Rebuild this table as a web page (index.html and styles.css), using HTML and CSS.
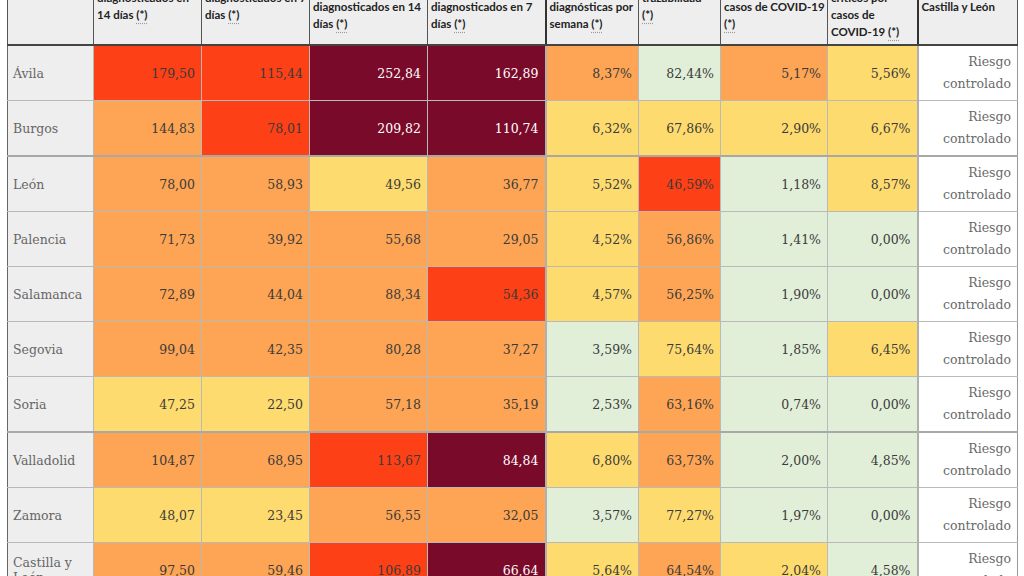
FILE: index.html
```html
<!DOCTYPE html>
<html lang="es">
<head>
<meta charset="utf-8">
<title>Situación epidemiológica Castilla y León</title>
<link rel="stylesheet" href="styles.css">
</head>
<body>
<table class="risk">
  <colgroup>
    <col class="c-name"><col class="c-a"><col class="c-a"><col class="c-b"><col class="c-b">
    <col class="c-c"><col class="c-d"><col class="c-e"><col class="c-f"><col class="c-g">
  </colgroup>
  <thead>
    <tr>
      <th></th>
      <th>Tasa de casos<br>diagnosticados en<br>14 días <abbr title="Por 100.000 habitantes">(*)</abbr></th>
      <th>Tasa de casos<br>diagnosticados en 7<br>días <abbr title="Por 100.000 habitantes">(*)</abbr></th>
      <th>Tasa de casos en<br>mayores de 65 años<br>diagnosticados en 14<br>días <abbr title="Por 100.000 habitantes">(*)</abbr></th>
      <th>Tasa de casos en<br>mayores de 65 años<br>diagnosticados en 7<br>días <abbr title="Por 100.000 habitantes">(*)</abbr></th>
      <th class="grp">Positividad de<br>pruebas<br>diagnósticas por<br>semana <abbr title="Porcentaje">(*)</abbr></th>
      <th>Porcentaje de<br>trazabilidad<br><abbr title="Porcentaje">(*)</abbr></th>
      <th>Ocupación de<br>camas hospital.<br>casos de COVID-19<br><abbr title="Porcentaje">(*)</abbr></th>
      <th>Ocupación de<br>camas UCI<br>críticos por<br>casos de<br>COVID-19 <abbr title="Porcentaje">(*)</abbr></th>
      <th class="grp">Nivel de alerta en<br>Castilla y León</th>
    </tr>
  </thead>
  <tbody>
    <tr>
      <td class="name">Ávila</td>
      <td class="red">179,50</td><td class="red">115,44</td><td class="mar">252,84</td><td class="mar">162,89</td>
      <td class="org grp">8,37%</td><td class="grn">82,44%</td><td class="org">5,17%</td><td class="yel">5,56%</td>
      <td class="lvl grp">Riesgo controlado</td>
    </tr>
    <tr>
      <td class="name">Burgos</td>
      <td class="org">144,83</td><td class="red">78,01</td><td class="mar">209,82</td><td class="mar">110,74</td>
      <td class="yel grp">6,32%</td><td class="yel">67,86%</td><td class="yel">2,90%</td><td class="yel">6,67%</td>
      <td class="lvl grp">Riesgo controlado</td>
    </tr>
  </tbody>
  <tbody>
    <tr>
      <td class="name">León</td>
      <td class="org">78,00</td><td class="org">58,93</td><td class="yel">49,56</td><td class="org">36,77</td>
      <td class="yel grp">5,52%</td><td class="red">46,59%</td><td class="grn">1,18%</td><td class="yel">8,57%</td>
      <td class="lvl grp">Riesgo controlado</td>
    </tr>
    <tr>
      <td class="name">Palencia</td>
      <td class="org">71,73</td><td class="org">39,92</td><td class="org">55,68</td><td class="org">29,05</td>
      <td class="yel grp">4,52%</td><td class="org">56,86%</td><td class="grn">1,41%</td><td class="grn">0,00%</td>
      <td class="lvl grp">Riesgo controlado</td>
    </tr>
    <tr>
      <td class="name">Salamanca</td>
      <td class="org">72,89</td><td class="org">44,04</td><td class="org">88,34</td><td class="red">54,36</td>
      <td class="yel grp">4,57%</td><td class="org">56,25%</td><td class="grn">1,90%</td><td class="grn">0,00%</td>
      <td class="lvl grp">Riesgo controlado</td>
    </tr>
    <tr>
      <td class="name">Segovia</td>
      <td class="org">99,04</td><td class="org">42,35</td><td class="org">80,28</td><td class="org">37,27</td>
      <td class="grn grp">3,59%</td><td class="yel">75,64%</td><td class="grn">1,85%</td><td class="yel">6,45%</td>
      <td class="lvl grp">Riesgo controlado</td>
    </tr>
    <tr>
      <td class="name">Soria</td>
      <td class="yel">47,25</td><td class="yel">22,50</td><td class="org">57,18</td><td class="org">35,19</td>
      <td class="grn grp">2,53%</td><td class="org">63,16%</td><td class="grn">0,74%</td><td class="grn">0,00%</td>
      <td class="lvl grp">Riesgo controlado</td>
    </tr>
  </tbody>
  <tbody>
    <tr>
      <td class="name">Valladolid</td>
      <td class="org">104,87</td><td class="org">68,95</td><td class="red">113,67</td><td class="mar">84,84</td>
      <td class="yel grp">6,80%</td><td class="org">63,73%</td><td class="grn">2,00%</td><td class="grn">4,85%</td>
      <td class="lvl grp">Riesgo controlado</td>
    </tr>
    <tr>
      <td class="name">Zamora</td>
      <td class="yel">48,07</td><td class="yel">23,45</td><td class="org">56,55</td><td class="org">32,05</td>
      <td class="grn grp">3,57%</td><td class="yel">77,27%</td><td class="grn">1,97%</td><td class="grn">0,00%</td>
      <td class="lvl grp">Riesgo controlado</td>
    </tr>
    <tr>
      <td class="name">Castilla y León</td>
      <td class="org">97,50</td><td class="org">59,46</td><td class="red">106,89</td><td class="mar">66,64</td>
      <td class="yel grp">5,64%</td><td class="org">64,54%</td><td class="yel">2,04%</td><td class="grn">4,58%</td>
      <td class="lvl grp">Riesgo controlado</td>
    </tr>
  </tbody>
</table>
</body>
</html>
```
FILE: styles.css
```css
html, body {
  margin: 0;
  padding: 0;
  background: #ffffff;
}
body {
  padding-left: 7px;
  overflow: hidden;
}
.risk {
  margin-top: -50px;
  width: 1010px;
  table-layout: fixed;
  border-collapse: collapse;
  font-family: "DejaVu Serif", "Liberation Serif", serif;
}
.c-name { width: 86px; }
.c-a { width: 108px; }
.c-b { width: 118px; }
.c-c { width: 93px; }
.c-d { width: 82px; }
.c-e { width: 107px; }
.c-f { width: 90px; }
.c-g { width: 100px; }

.risk th {
  background: #eeeeee;
  font-family: Lato, "Liberation Sans", sans-serif;
  font-weight: 700;
  font-size: 11.5px;
  line-height: 17px;
  color: #222;
  text-align: left;
  vertical-align: middle;
  white-space: nowrap;
  padding: 4px 3px;
  border: 1px solid #555;
  border-bottom: 2px solid #444;
  overflow: hidden;
}
.risk th.grp { border-left: 2px solid #333; }
.risk abbr {
  text-decoration: underline dotted #999;
  text-underline-offset: 4px;
}
.risk td {
  height: 54px;
  padding: 0 6px;
  border: 1px solid #b9b9b9;
  font-size: 12.5px;
  color: #3a3a3a;
  text-align: right;
  vertical-align: middle;
}
.risk td.grp { border-left: 2px solid #b0b0b0; }
.risk tbody + tbody tr:first-child td { border-top: 2px solid #a8a8a8; }
.risk td.name {
  background: #eeeeee;
  text-align: left;
  color: #666;
  font-size: 12.5px;
  padding: 0 5px;
  border-left: 1px solid #666;
}
.risk td.lvl {
  background: #ffffff;
  color: #6a6a6a;
  line-height: 22px;
  padding: 0 6px 0 10px;
  border-right: 1px solid #999;
}
.red { background: #fe4016; }
.mar { background: #7a0a29; color: #ffffff !important; }
.org { background: #fda554; }
.yel { background: #fedb6f; }
.grn { background: #e1efd9; }
```
